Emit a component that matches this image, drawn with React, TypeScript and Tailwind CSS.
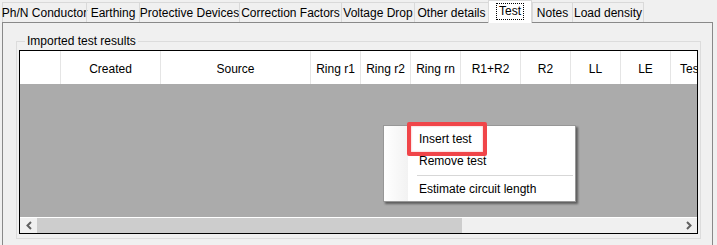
import React from "react";

const tabs = [
  { label: "Ph/N Conductor", w: "w-[84px]" },
  { label: "Earthing", w: "w-[53px]" },
  { label: "Protective Devices", w: "w-[100px]" },
  { label: "Correction Factors", w: "w-[102px]" },
  { label: "Voltage Drop", w: "w-[73px]" },
  { label: "Other details", w: "w-[74px]" },
  { label: "Test", w: "w-[44px]", active: true },
  { label: "Notes", w: "w-[40px]" },
  { label: "Load density", w: "w-[72px]" },
];

const cols = [
  { label: "", w: "w-[41px]" },
  { label: "Created", w: "w-[100px]" },
  { label: "Source", w: "w-[150px]" },
  { label: "Ring r1", w: "w-[50px]" },
  { label: "Ring r2", w: "w-[50px]" },
  { label: "Ring rn", w: "w-[50px]" },
  { label: "R1+R2", w: "w-[60px]" },
  { label: "R2", w: "w-[50px]" },
  { label: "LL", w: "w-[50px]" },
  { label: "LE", w: "w-[50px]" },
];

const Chevron = ({ dir }: { dir: "left" | "right" }) => (
  <svg width="8" height="9" viewBox="0 0 8 9">
    <path
      d={dir === "left" ? "M6 1 L2.5 4.5 L6 8" : "M2 1 L5.5 4.5 L2 8"}
      fill="none"
      stroke="#606060"
      strokeWidth="2"
    />
  </svg>
);

export default function App() {
  return (
    <div className="relative w-[717px] h-[245px] overflow-hidden bg-[#f0f0f0] font-['Liberation_Sans',sans-serif] text-[12px] text-black">
      {/* tab strip */}
      <div className="flex h-[22px] items-end pl-[2px]">
        {tabs.map((t, i) =>
          t.active ? (
            <div
              key={t.label}
              className={`${t.w} h-[23px] -mb-px relative z-10 bg-white border-x border-t border-[#d9d9d9] flex items-start justify-center pt-[2px]`}
            >
              <span className="border border-dotted border-black px-[2px] leading-[15px]">{t.label}</span>
            </div>
          ) : (
            <div
              key={t.label}
              className={`${t.w} h-[20px] border-t border-l border-[#d9d9d9] ${i === tabs.length - 1 ? "border-r" : ""} flex items-center justify-center whitespace-nowrap`}
            >
              {t.label}
            </div>
          )
        )}
      </div>

      {/* tab page */}
      <div className="ml-[2px] w-[711px] h-[230px] border-t border-x border-[#898989] pt-[11px] pl-[13px]">
        <fieldset className="w-[685px] h-[205px] border border-[#dcdcdc] px-[2px]">
          <legend className="ml-[6px] px-[2px] leading-[14px]">Imported test results</legend>
          <div className="mt-[2px] w-[679px] h-[184px] border border-black flex flex-col bg-[#ababab]">
            {/* header */}
            <div className="flex h-[33px] bg-white shrink-0 overflow-hidden">
              {cols.map((c, i) => (
                <div
                  key={i}
                  className={`${c.w} shrink-0 h-full border-r border-[#e5e5e5] flex items-center justify-center pt-[3px] whitespace-nowrap`}
                >
                  {c.label}
                </div>
              ))}
              <div className="shrink-0 h-full flex items-center pl-[9px] pt-[3px]">Test</div>
            </div>
            <div className="flex-1" />
            {/* horizontal scrollbar */}
            <div className="h-[16px] border-t border-white bg-[#f0f0f0] flex items-stretch">
              <div className="w-[17px] flex items-center justify-center">
                <Chevron dir="left" />
              </div>
              <div className="w-[425px] bg-[#cdcdcd]" />
              <div className="flex-1" />
              <div className="w-[17px] flex items-center justify-center">
                <Chevron dir="right" />
              </div>
            </div>
          </div>
        </fieldset>
      </div>

      {/* context menu */}
      <div className="absolute left-[383px] top-[125px] w-[193px] border border-[#979797] bg-white py-[2px] shadow-[2px_2px_2px_rgba(0,0,0,0.45)]">
        <div className="absolute left-0 top-0 bottom-0 w-[24px] bg-gradient-to-r from-white to-[#f2f2f2]" />
        <div className="relative h-[22px] flex items-center pl-[35px]">Insert test</div>
        <div className="relative h-[22px] flex items-center pl-[35px]">Remove test</div>
        <div className="relative h-[6px] flex items-center pl-[33px] pr-[2px]">
          <div className="h-px w-full bg-[#d7d7d7]" />
        </div>
        <div className="relative h-[21px] flex items-center pl-[35px]">Estimate circuit length</div>
        <div className="absolute left-[23px] top-[-4px] w-[80px] h-[34px] rounded-[2px] border-[4px] border-[#f04549] shadow-[inset_0_0_2px_rgba(240,69,73,0.5)]" />
      </div>
    </div>
  );
}
